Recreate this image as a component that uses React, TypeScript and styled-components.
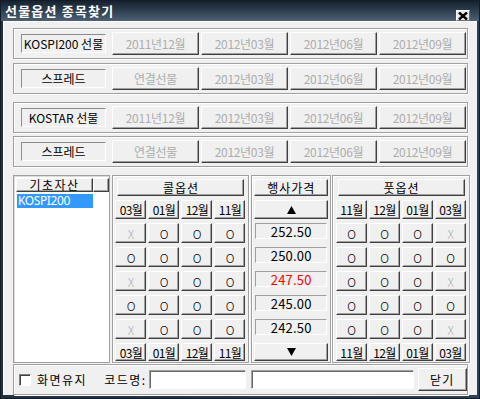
import React from 'react';
import styled, { createGlobalStyle } from 'styled-components';

const GlobalStyle = createGlobalStyle`
  html, body {
    margin: 0;
    padding: 0;
    background: #ffffff;
  }
  body {
    font-family: "Noto Sans CJK KR", "Noto Sans", sans-serif;
    font-size: 12px;
  }
  * {
    box-sizing: border-box;
  }
`;

const Frame = styled.div`
  width: 480px;
  height: 399px;
  display: flex;
  flex-direction: column;
  background: linear-gradient(90deg, #22313f 0%, #2e4053 100%);
  border: 1px solid #141d26;
`;

const TitleBar = styled.div`
  height: 20px;
  flex: none;
  display: flex;
  align-items: center;
  justify-content: space-between;
  padding: 0 9px 0 4px;
  background: linear-gradient(180deg, #16222f 0%, #2c3d4e 45%, #4d6074 100%);
`;

const TitleText = styled.span`
  color: #ffffff;
  font-weight: bold;
  font-size: 13px;
  letter-spacing: 1.2px;
  line-height: 20px;
`;

const CloseBox = styled.div`
  width: 14px;
  height: 11px;
  align-self: flex-end;
  background: #e6e6e6;
  border: 1px solid;
  border-color: #ffffff #6e6e6e #6e6e6e #ffffff;
  display: flex;
  align-items: center;
  justify-content: center;
`;

const Body = styled.div`
  flex: 1;
  margin: 0 2px 4px 2px;
  padding: 6px 9px 0 9px;
  background: #f0f0f0;
  border-top: 1px solid #ffffff;
  border-left: 1px solid #ffffff;
  display: flex;
  flex-direction: column;
`;

const GroupRow = styled.div<{ $mt: number }>`
  height: 31px;
  margin-top: ${(p) => p.$mt}px;
  flex: none;
  display: flex;
  align-items: center;
  gap: 2px;
  padding-left: 7px;
  border: 1px solid #a0a0a0;
  box-shadow: 1px 1px 0 #ffffff, inset 1px 1px 0 #ffffff;
`;

const SunkenLabel = styled.div`
  width: 85px;
  height: 19px;
  margin-right: 4px;
  display: flex;
  align-items: center;
  justify-content: center;
  border: 1px solid;
  border-color: #8c8c8c #ffffff #ffffff #8c8c8c;
  color: #000000;
  font-size: 12px;
  white-space: nowrap;
`;

const RaisedButton = styled.button<{ $dim?: boolean }>`
  font: inherit;
  font-size: 12px;
  padding: 0;
  margin: 0;
  display: flex;
  align-items: center;
  justify-content: center;
  white-space: nowrap;
  background: #f0f0f0;
  color: ${(p) => (p.$dim ? '#adadad' : '#000000')};
  border: 1px solid;
  border-color: #ffffff #404040 #404040 #ffffff;
  box-shadow: inset -1px -1px 0 #a0a0a0;
  letter-spacing: -0.3px;
`;

const SeriesButton = styled(RaisedButton)`
  width: 87px;
  height: 23px;
`;

const BottomSection = styled.div`
  margin-top: 8px;
  margin-right: -2px;
  height: 188px;
  flex: none;
  display: flex;
`;

const ListPanel = styled.div`
  width: 98px;
  background: #ffffff;
  border: 1px solid #a0a0a0;
  box-shadow: inset 1px 1px 0 #dcdcdc;
  padding: 2px 0 0 2px;
  display: flex;
  flex-direction: column;
`;

const ListHeader = styled.div`
  display: flex;
  height: 14px;
`;

const HeaderCell = styled.div<{ $w?: number }>`
  width: ${(p) => (p.$w ? `${p.$w}px` : 'auto')};
  flex: ${(p) => (p.$w ? 'none' : '1')};
  background: #f0f0f0;
  border: 1px solid;
  border-color: #ffffff #404040 #404040 #ffffff;
  box-shadow: inset -1px -1px 0 #a0a0a0;
  display: flex;
  align-items: center;
  justify-content: center;
  font-size: 12px;
  line-height: 12px;
  letter-spacing: 1.5px;
`;

const ListItem = styled.div`
  margin: 2px 0 0 1px;
  width: 76px;
  height: 14px;
  background: #3399ff;
  color: #ffffff;
  font-family: "Liberation Sans Narrow", "Noto Sans", sans-serif;
  font-size: 12px;
  line-height: 14px;
  padding-left: 1px;
  letter-spacing: -0.4px;
`;

const OptionPanel = styled.div<{ $left: number }>`
  margin-left: ${(p) => p.$left}px;
  padding: 3px 3px 1px ${(p) => (p.$left === 2 ? 2 : 3)}px;
  border: 1px solid #a0a0a0;
  box-shadow: 1px 1px 0 #ffffff, inset 1px 1px 0 #ffffff;
  display: grid;
  grid-template-columns: repeat(4, 31px);
  grid-template-rows: 17px 19px repeat(5, 20px) 18px;
  column-gap: 2px;
  row-gap: 4px;
`;

const PanelHeader = styled(RaisedButton)`
  grid-column: 1 / span 4;
  margin: 0 1px 0 2px;
  letter-spacing: 1px;
`;

const CellButton = styled(RaisedButton)`
  width: 100%;
  height: 100%;
  font-weight: 300;
`;

const MonthButton = styled(RaisedButton)`
  width: 100%;
  height: 100%;
  font-size: 12px;
  letter-spacing: -0.6px;
`;

const StrikePanel = styled.div`
  margin-left: 2px;
  width: 80px;
  padding: 3px 2px 1px 2px;
  border: 1px solid #a0a0a0;
  box-shadow: 1px 1px 0 #ffffff, inset 1px 1px 0 #ffffff;
  display: grid;
  grid-template-columns: 1fr;
  grid-template-rows: 17px 19px repeat(5, 20px) 18px;
  row-gap: 4px;
`;

const StrikeButton = styled(RaisedButton)`
  width: 100%;
  height: 100%;
  letter-spacing: 1px;
`;

const StrikeValue = styled.div<{ $color: string }>`
  height: 16px;
  margin: 0 1px;
  border: 1px solid;
  border-color: #a0a0a0 #ffffff #ffffff #a0a0a0;
  display: flex;
  align-items: center;
  justify-content: center;
  color: ${(p) => p.$color};
  font-size: 13px;
  letter-spacing: 0.2px;
`;

const BottomBar = styled.div`
  margin-top: 1px;
  height: 31px;
  flex: none;
  display: flex;
  align-items: center;
  padding-left: 5px;
  border: 1px solid #a0a0a0;
  box-shadow: 1px 1px 0 #ffffff, inset 1px 1px 0 #ffffff;
`;

const CheckBox = styled.div`
  width: 12px;
  height: 12px;
  background: #ffffff;
  border: 1px solid;
  border-color: #808080 #ffffff #ffffff #808080;
  box-shadow: inset 1px 1px 0 #404040;
`;

const BarLabel = styled.span<{ $ml: number }>`
  margin-left: ${(p) => p.$ml}px;
  font-size: 12px;
  letter-spacing: 1.5px;
  color: #000000;
`;

const TextInput = styled.div<{ $w: number; $ml: number }>`
  width: ${(p) => p.$w}px;
  margin-left: ${(p) => p.$ml}px;
  height: 19px;
  background: #ffffff;
  border: 1px solid;
  border-color: #a0a0a0 #ffffff #ffffff #a0a0a0;
  box-shadow: inset 1px 1px 0 #696969;
`;

const DialogButton = styled(RaisedButton)`
  width: 49px;
  height: 23px;
  margin-left: 4px;
  letter-spacing: 1px;
`;

const Triangle = ({ down }: { down?: boolean }) => (
  <svg width="9" height="8" viewBox="0 0 9 8">
    <polygon points={down ? '0,0 9,0 4.5,8' : '4.5,0 9,8 0,8'} fill="#000" />
  </svg>
);

const rows = [
  { strike: '252.50', call: 'XOOO', put: 'OOOX', color: '#000000' },
  { strike: '250.00', call: 'OOOO', put: 'OOOO', color: '#000000' },
  { strike: '247.50', call: 'XOOO', put: 'OOOX', color: '#ff0000' },
  { strike: '245.00', call: 'OOOO', put: 'OOOO', color: '#000000' },
  { strike: '242.50', call: 'XOOO', put: 'OOOX', color: '#000000' },
];

const series = [
  { label: 'KOSPI200 선물', items: ['2011년12월', '2012년03월', '2012년06월', '2012년09월'], mt: 0 },
  { label: '스프레드', items: ['연결선물', '2012년03월', '2012년06월', '2012년09월'], mt: 4 },
  { label: 'KOSTAR 선물', items: ['2011년12월', '2012년03월', '2012년06월', '2012년09월'], mt: 8 },
  { label: '스프레드', items: ['연결선물', '2012년03월', '2012년06월', '2012년09월'], mt: 3 },
];

const callMonths = ['03월', '01월', '12월', '11월'];
const putMonths = ['11월', '12월', '01월', '03월'];

export default function App() {
  return (
    <>
      <GlobalStyle />
      <Frame>
        <TitleBar>
          <TitleText>선물옵션 종목찾기</TitleText>
          <CloseBox>
            <svg width="10" height="8" viewBox="0 0 10 8">
              <path d="M1 0.5 L9 7.5 M9 0.5 L1 7.5" stroke="#000" strokeWidth="2.4" />
            </svg>
          </CloseBox>
        </TitleBar>
        <Body>
          {series.map((s, i) => (
            <GroupRow key={i} $mt={s.mt}>
              <SunkenLabel>{s.label}</SunkenLabel>
              {s.items.map((it) => (
                <SeriesButton key={it} $dim>
                  {it}
                </SeriesButton>
              ))}
            </GroupRow>
          ))}

          <BottomSection>
            <ListPanel>
              <ListHeader>
                <HeaderCell $w={77}>기초자산</HeaderCell>
                <HeaderCell />
              </ListHeader>
              <ListItem>KOSPI200</ListItem>
            </ListPanel>

            <OptionPanel $left={2}>
              <PanelHeader>콜옵션</PanelHeader>
              {callMonths.map((m) => (
                <MonthButton key={`t${m}`}>{m}</MonthButton>
              ))}
              {rows.map((r, ri) =>
                r.call.split('').map((c, ci) => (
                  <CellButton key={`c${ri}${ci}`} $dim={c === 'X'}>
                    {c}
                  </CellButton>
                ))
              )}
              {callMonths.map((m) => (
                <MonthButton key={`b${m}`}>{m}</MonthButton>
              ))}
            </OptionPanel>

            <StrikePanel>
              <StrikeButton>행사가격</StrikeButton>
              <StrikeButton>
                <Triangle />
              </StrikeButton>
              {rows.map((r) => (
                <StrikeValue key={r.strike} $color={r.color}>
                  {r.strike}
                </StrikeValue>
              ))}
              <StrikeButton>
                <Triangle down />
              </StrikeButton>
            </StrikePanel>

            <OptionPanel $left={1}>
              <PanelHeader>풋옵션</PanelHeader>
              {putMonths.map((m) => (
                <MonthButton key={`t${m}`}>{m}</MonthButton>
              ))}
              {rows.map((r, ri) =>
                r.put.split('').map((c, ci) => (
                  <CellButton key={`p${ri}${ci}`} $dim={c === 'X'}>
                    {c}
                  </CellButton>
                ))
              )}
              {putMonths.map((m) => (
                <MonthButton key={`b${m}`}>{m}</MonthButton>
              ))}
            </OptionPanel>
          </BottomSection>

          <BottomBar>
            <CheckBox />
            <BarLabel $ml={6}>화면유지</BarLabel>
            <BarLabel $ml={17}>코드명:</BarLabel>
            <TextInput $w={97} $ml={2} />
            <TextInput $w={163} $ml={5} />
            <DialogButton>닫기</DialogButton>
          </BottomBar>
        </Body>
      </Frame>
    </>
  );
}
